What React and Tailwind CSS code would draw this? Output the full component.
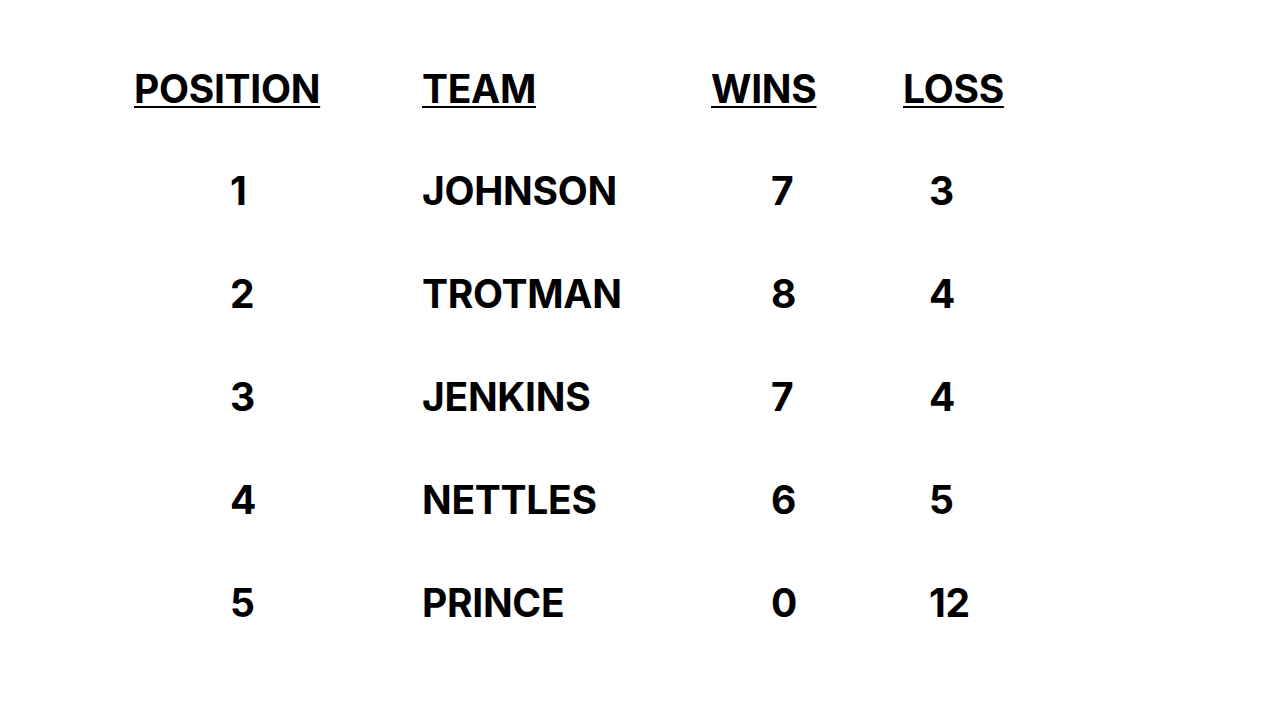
const rows = [
  { pos: '1', team: 'JOHNSON', wins: '7', loss: '3' },
  { pos: '2', team: 'TROTMAN', wins: '8', loss: '4' },
  { pos: '3', team: 'JENKINS', wins: '7', loss: '4' },
  { pos: '4', team: 'NETTLES', wins: '6', loss: '5' },
  { pos: '5', team: 'PRINCE', wins: '0', loss: '12' },
];

export default function App() {
  return (
    <div className="w-[1280px] h-[720px] bg-white text-black font-bold" style={{ fontFamily: 'Inter, "Liberation Sans", sans-serif' }}>
      <div className="pl-[134px] pt-[64px]">
        <div className="flex h-[50px] items-center text-[39px] tracking-[-0.3px]">
          <div className="w-[288px]"><span className="underline decoration-2 underline-offset-[3px]">POSITION</span></div>
          <div className="w-[289px]"><span className="underline decoration-2 underline-offset-[3px]">TEAM</span></div>
          <div className="w-[192px]"><span className="underline decoration-2 underline-offset-[3px]">WINS</span></div>
          <div><span className="underline decoration-2 underline-offset-[3px]">LOSS</span></div>
        </div>
        <div className="flex flex-col gap-[53px] pt-[52px] text-[39px] tracking-[-0.3px]">
          {rows.map((r) => (
            <div key={r.pos} className="flex h-[50px] items-center">
              <div className="w-[288px] pl-[96px]">{r.pos}</div>
              <div className="w-[289px]">{r.team}</div>
              <div className="w-[192px] pl-[60px]">{r.wins}</div>
              <div className="pl-[26px]">{r.loss}</div>
            </div>
          ))}
        </div>
      </div>
    </div>
  );
}
